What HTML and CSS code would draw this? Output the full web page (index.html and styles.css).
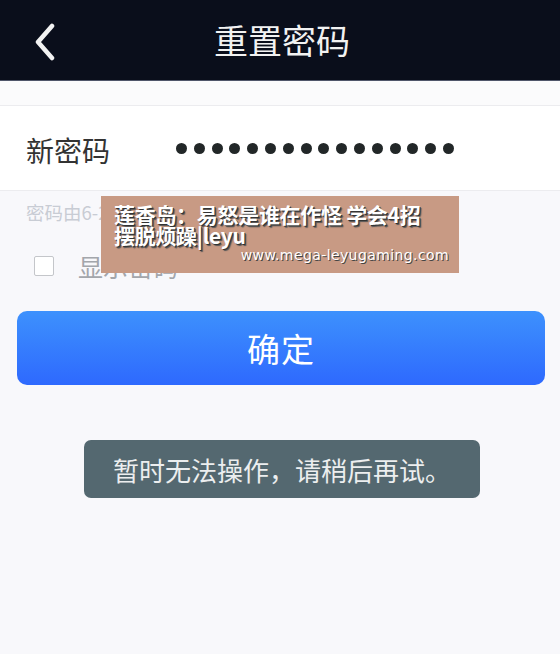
FILE: index.html
```html
<!DOCTYPE html>
<html lang="zh">
<head>
  <meta charset="UTF-8" />
  <meta name="viewport" content="width=device-width, initial-scale=1.0"/>
  <title>重置密码</title>
  <link rel="stylesheet" href="styles.css">
</head>
<body>

<div class="entete">
  <span class="retour">
    <svg width="22" height="38" viewBox="0 0 22 38"><path d="M18 3 L4 19 L18 35" fill="none" stroke="#f2f2f2" stroke-width="4.5" stroke-linecap="round" stroke-linejoin="round"/></svg>
  </span>
  <h1>重置密码</h1>
</div>

<div class="bande"></div>

<div class="ligne">
  <span class="libelle">新密码</span>
  <span class="points" id="points"></span>
</div>

<p class="aide">密码由6-20位英文字母、数字或符号组成</p>

<label class="afficher">
  <span class="case"></span>
  <span>显示密码</span>
</label>

<div class="action">
  <button class="valider">确定</button>
</div>

<div class="message">
  <div class="toast">暂时无法操作，请稍后再试。</div>
</div>

<div class="filigrane">
  <div class="titre">莲香岛：易怒是谁在作怪&nbsp;学会4招<br>摆脱烦躁|leyu</div>
  <div class="site">www.mega-leyugaming.com</div>
</div>

<script>
  const points = document.getElementById("points");
  for (let i = 0; i < 16; i++) {
    points.innerHTML += '<i></i>';
  }
</script>

</body>
</html>
```

FILE: styles.css
```css
body {
  margin: 0;
  background: #f8f8fb;
  font-family: "Noto Sans CJK SC", "Noto Sans", sans-serif;
  position: relative;
  min-height: 654px;
}
.entete {
  height: 80px;
  background: #0a0e1b;
  border-bottom: 1px solid #50566a;
  display: flex;
  align-items: center;
  justify-content: center;
  position: relative;
}
.retour {
  position: absolute;
  left: 34px;
  top: 23px;
}
.entete h1 {
  margin: 0;
  color: #f2f2f2;
  font-size: 34px;
  font-weight: 400;
  line-height: 1;
  margin-left: 4px;
}
.bande {
  height: 24px;
  background: #fbfbfc;
  border-bottom: 1px solid #ececef;
}
.ligne {
  height: 84px;
  background: #fff;
  border-bottom: 1px solid #ececef;
  display: flex;
  align-items: center;
  padding-left: 26px;
}
.libelle {
  width: 150px;
  font-size: 28px;
  color: #333;
  margin-top: 4px;
}
.points {
  display: flex;
  gap: 6.8px;
  margin-top: 1px;
}
.points i {
  width: 11px;
  height: 11px;
  border-radius: 50%;
  background: #222728;
}
.aide {
  margin: 0;
  padding: 8px 26px 0;
  font-size: 18.5px;
  color: #c8ccd4;
  height: 38px;
}
.afficher {
  display: flex;
  align-items: center;
  gap: 24px;
  padding-left: 34px;
  height: 58px;
  font-size: 25px;
  color: #a3a6ab;
}
.case {
  width: 18px;
  height: 18px;
  border: 1.5px solid #c4c6ca;
  border-radius: 2px;
  background: #fff;
}
.action {
  padding: 16px 15px 0 17px;
}
.valider {
  width: 100%;
  height: 74px;
  border: none;
  border-radius: 10px;
  background: linear-gradient(#3d91fd, #2e69fe);
  color: #fff;
  font-family: inherit;
  font-size: 33px;
  letter-spacing: 1px;
}
.message {
  display: flex;
  justify-content: center;
  padding-top: 55px;
  padding-left: 4px;
}
.toast {
  width: 396px;
  height: 58px;
  border-radius: 7px;
  background: #546870;
  color: #eceeef;
  font-size: 26px;
  display: flex;
  align-items: center;
  justify-content: center;
}
.filigrane {
  position: absolute;
  left: 101px;
  top: 196px;
  width: 358px;
  height: 77px;
  background: #c89a84;
  box-sizing: border-box;
  padding: 8px 10px 0 13px;
}
.filigrane .titre {
  color: #fff;
  font-weight: 700;
  font-size: 21px;
  line-height: 21px;
  letter-spacing: -0.3px;
  text-shadow: 1px 1px 0 #333, 2px 2px 1px #555;
}
.filigrane .site {
  color: #fff;
  font-family: "DejaVu Sans", sans-serif;
  font-size: 14px;
  letter-spacing: 0.4px;
  text-align: right;
  margin-top: 1px;
  text-shadow: 1px 1px 0 #444;
}
```
